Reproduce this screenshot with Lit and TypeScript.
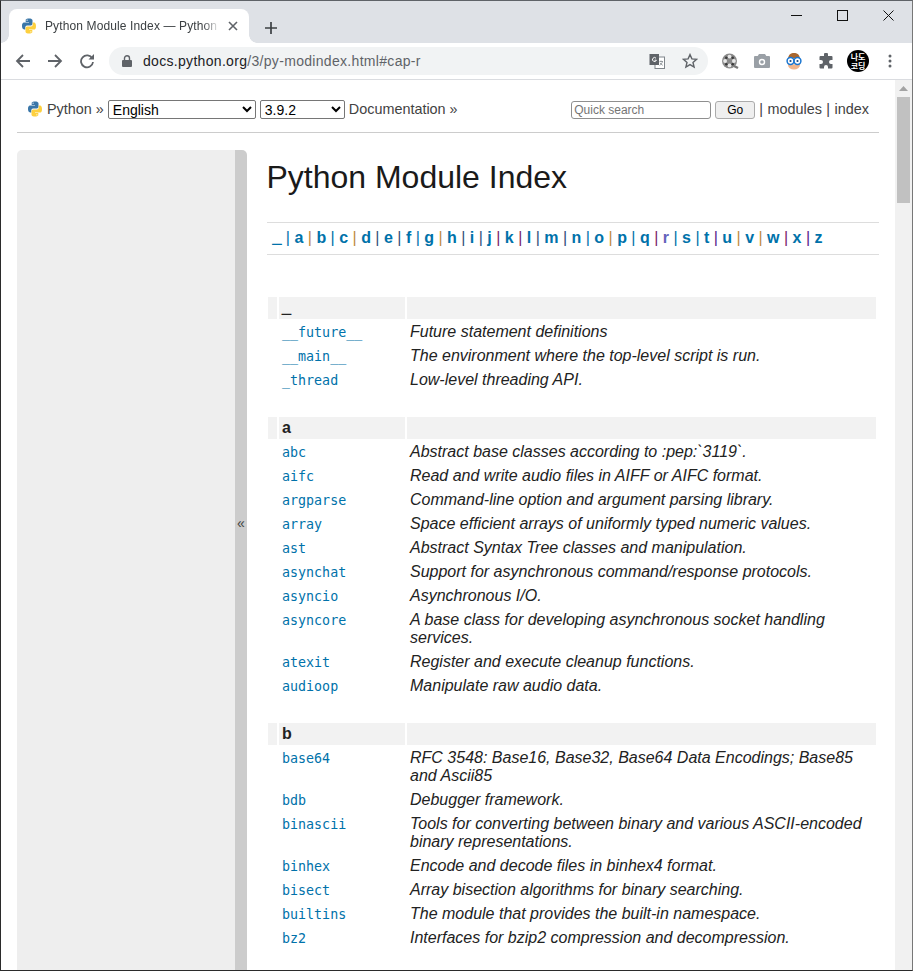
import { LitElement, html, css, svg } from "lit";
import { customElement } from "lit/decorators.js";

const letters = "_ a b c d e f g h i j k l m n o p q r s t u v w x z".split(" ");
const sepColors = ["#0072aa", "#c08a3e", "#0072aa", "#c08a3e", "#33507a", "#33507a", "#0072aa", "#c08a3e", "#33507a", "#33507a", "#7a1e6a", "#7a1e6a", "#33507a", "#33507a", "#0072aa", "#c08a3e", "#0072aa", "#7a1e6a", "#0072aa", "#0072aa", "#5a1e8a", "#c08a3e", "#c08a3e", "#7a1e6a", "#5a1e8a"];

type Row = [string, string];
const groups: [string, Row[]][] = [
  ["_", [
    ["__future__", "Future statement definitions"],
    ["__main__", "The environment where the top-level script is run."],
    ["_thread", "Low-level threading API."],
  ]],
  ["a", [
    ["abc", "Abstract base classes according to :pep:`3119`."],
    ["aifc", "Read and write audio files in AIFF or AIFC format."],
    ["argparse", "Command-line option and argument parsing library."],
    ["array", "Space efficient arrays of uniformly typed numeric values."],
    ["ast", "Abstract Syntax Tree classes and manipulation."],
    ["asynchat", "Support for asynchronous command/response protocols."],
    ["asyncio", "Asynchronous I/O."],
    ["asyncore", "A base class for developing asynchronous socket handling services."],
    ["atexit", "Register and execute cleanup functions."],
    ["audioop", "Manipulate raw audio data."],
  ]],
  ["b", [
    ["base64", "RFC 3548: Base16, Base32, Base64 Data Encodings; Base85 and Ascii85"],
    ["bdb", "Debugger framework."],
    ["binascii", "Tools for converting between binary and various ASCII-encoded binary representations."],
    ["binhex", "Encode and decode files in binhex4 format."],
    ["bisect", "Array bisection algorithms for binary searching."],
    ["builtins", "The module that provides the built-in namespace."],
    ["bz2", "Interfaces for bzip2 compression and decompression."],
  ]],
];

const pyLogo = (size: number) => svg`<svg width=${size} height=${size} viewBox="0 0 16 16">
  <path fill="#3a76a8" d="M7.900.5C4.600.5 4.700 2 4.700 2v1.900H8v.5H3.300S1 4.100 1 7.800s2 3.600 2 3.600h1.300V9.600s-.1-2 2-2h3.300s1.900 0 1.900-1.800V2.600S11.800.5 7.900.5zM6.100 1.600c.4 0 .6.3.6.6s-.3.6-.6.6-.6-.3-.6-.6.2-.6.6-.6z"/>
  <path fill="#fdd03f" d="M8.100 15.500c3.300 0 3.200-1.500 3.200-1.500v-1.900H8v-.5h4.700s2.300.3 2.300-3.400-2-3.600-2-3.600h-1.300v1.800s.1 2-2 2H6.400s-1.900 0-1.900 1.800v3.200s-.3 2.100 3.600 2.100zm1.800-1.100c-.4 0-.6-.3-.6-.6s.3-.6.6-.6.6.3.6.6-.2.6-.6.6z"/>
</svg>`;

@customElement("app-root")
export class AppRoot extends LitElement {
  static styles = css`
    :host { display: block; height: 971px; overflow: hidden; font-family: "Liberation Sans", Arial, sans-serif; }
    .window { height: 971px; box-sizing: border-box; border: 1px solid #2b2b2b; border-top-color: #5f6368; border-right-color: #777; display: flex; flex-direction: column; background: #fff; overflow: hidden; }
    .titlebar { height: 42px; flex: none; background: #dee1e6; display: flex; align-items: flex-end; padding-left: 8px; position: relative; }
    .tab { width: 240px; height: 34px; background: #fff; border-radius: 8px 8px 0 0; display: flex; align-items: center; box-sizing: border-box; padding: 0 0 0 12px; position: relative; }
    .tab::before, .tab::after { content: ""; position: absolute; bottom: 0; width: 8px; height: 8px; }
    .tab::before { left: -8px; background: radial-gradient(circle at 0 0, transparent 7.5px, #fff 8px); }
    .tab::after { right: -8px; background: radial-gradient(circle at 100% 0, transparent 7.5px, #fff 8px); }
    .tab-title { margin-left: 8px; font: 12px "Liberation Sans", sans-serif; color: #3c4043; width: 176px; white-space: nowrap; overflow: hidden; letter-spacing: 0.12px; -webkit-mask-image: linear-gradient(to right, #000 158px, transparent 175px); }
    .tab-x { margin-left: 7px; display: flex; }
    .newtab { margin: 0 0 9px 16px; display: flex; }
    .winctl { position: absolute; right: 1px; top: 0; display: flex; }
    .winctl div { width: 46px; height: 29px; display: flex; align-items: center; justify-content: center; }
    .toolbar { height: 36px; flex: none; background: #fff; border-bottom: 1px solid #dadce0; display: flex; align-items: center; position: relative; }
    .nav { display: flex; width: 32px; justify-content: center; }
    .nav.first { margin-left: 6px; }
    .omni { margin-left: 6px; width: 599px; height: 28px; border-radius: 14px; background: #f1f3f4; display: flex; align-items: center; padding-left: 13px; box-sizing: border-box; }
    .url { margin-left: 11px; font: 14px "Liberation Sans", sans-serif; letter-spacing: 0.31px; color: #5f6368; flex: 1; }
    .url b { font-weight: normal; color: #202124; }
    .omni-icon { display: flex; width: 30px; justify-content: center; }
    .omni-icon.star { width: 36px; }
    .exts { display: flex; align-items: center; margin-left: 6px; }
    .ext { width: 32px; display: flex; justify-content: center; }
    .body { flex: 1; display: flex; min-height: 0; }
    .page { flex: 1; min-width: 0; padding: 0 16px; overflow: hidden; }
    .scroll { width: 17px; flex: none; background: #f1f1f1; display: flex; flex-direction: column; align-items: center; }
    .scroll .arrow { height: 17px; display: flex; align-items: center; justify-content: center; }
    .scroll .thumb { width: 13px; height: 106px; background: #c1c1c1; }
    .related { height: 53px; box-sizing: border-box; border-bottom: 1px solid #ccc; display: flex; align-items: center; font-size: 14.4px; color: #424242; padding: 6px 10px 0; white-space: nowrap; }
    .crumb { display: flex; align-items: center; gap: 4px; }
    select { font: 14px "Liberation Sans", sans-serif; color: #000; background: #fff; border: 1px solid #767676; border-radius: 2px; height: 19px; box-sizing: border-box; padding: 0; flex: none; }
    .lang { width: 148px; margin-left: 4px; }
    .ver { width: 85px; margin-left: 4px; }
    .doc { margin-left: 4px; }
    .spacer { flex: 1; }
    .search { width: 140px; height: 18px; box-sizing: border-box; border: 1px solid #8f8f8f; border-radius: 3px; font: 12px "Liberation Sans", sans-serif; padding: 0 2px; margin: 1px 4px 0 0; }
    .search::placeholder { color: #757575; }
    .go { width: 40px; height: 18px; box-sizing: border-box; border: 1px solid #ababab; border-radius: 3px; background: #efefef; font: 12px "Liberation Sans", sans-serif; color: #000; padding: 0; margin: 1px 4px 0 0; }
    .links { word-spacing: 0.5px; }
    .main { display: flex; margin-top: 17px; }
    .side { width: 218px; flex: none; background: #eee; border-radius: 5px 0 0 0; height: 840px; }
    .collapse { width: 12px; flex: none; background: #ccc; border-radius: 0 5px 0 0; height: 840px; display: flex; align-items: center; justify-content: center; color: #444; font-size: 14px; padding-bottom: 95px; box-sizing: border-box; }
    .content { flex: 1; min-width: 0; padding-left: 20px; }
    h1 { margin: 0 0 0 -0.6px; font: 400 32px/55px "Liberation Sans", sans-serif; color: #1a1a1a; }
    .letters { margin-top: 17px; height: 33px; box-sizing: border-box; border: solid #ddd; border-width: 1px 0; display: flex; align-items: center; padding: 0 0 2px 5.5px; font-size: 16px; font-weight: 700; white-space: nowrap; }
    .letters a { color: #0072aa; }
    .letters a.cur { color: #6363bb; }
    .letters i { font-style: normal; font-weight: 400; margin: 0 4.45px; }
    .us { -webkit-text-stroke: 0.6px currentColor; }
    table { margin: 42px 0 0 -1px; border-collapse: separate; border-spacing: 2px 0; width: 612px; table-layout: fixed; font-size: 16px; line-height: 18px; color: #222; }
    col.c0 { width: 9px; }
    col.c1 { width: 126px; }
    .head td { background: #f2f2f2; height: 22px; padding: 0 0 0 3px; font-weight: 700; line-height: 22px; vertical-align: bottom; }
    .row td { padding: 4px 3px 2px; vertical-align: top; }
    .row td.d { font-style: italic; }
    .row td.m { padding: 5px 3px 1px; }
    .row a { display: block; font: 13.33px/18px "DejaVu Sans Mono", monospace; color: #0072aa; }
    .gap td { height: 26px; padding: 0; }
  `;

  render() {
    return html`<div class="window">
      <div class="titlebar">
        <div class="tab">
          ${pyLogo(16)}
          <span class="tab-title">Python Module Index — Python 3.9.2 documentation</span>
          <span class="tab-x"><svg width="10" height="10" viewBox="0 0 10 10"><path d="M1 1l8 8M9 1l-8 8" stroke="#5f6368" stroke-width="1.600"/></svg></span>
        </div>
        <span class="newtab"><svg width="12" height="12" viewBox="0 0 12 12"><path d="M6 0v12M0 6h12" stroke="#3c4043" stroke-width="1.700"/></svg></span>
        <div class="winctl">
          <div><svg width="11" height="11" viewBox="0 0 11 11"><path d="M0 5.500h11" stroke="#111" fill="none"/></svg></div>
          <div><svg width="11" height="11" viewBox="0 0 11 11"><rect x=".5" y=".5" width="10" height="10" stroke="#111" fill="none"/></svg></div>
          <div><svg width="11" height="11" viewBox="0 0 11 11"><path d="M.5.5l10 10M10.500.5l-10 10" stroke="#111" fill="none"/></svg></div>
        </div>
      </div>
      <div class="toolbar">
        <span class="nav first"><svg width="16" height="16" viewBox="0 0 16 16"><path d="M15 8H2M8 2L2 8l6 6" fill="none" stroke="#5f6368" stroke-width="1.800"/></svg></span>
        <span class="nav"><svg width="16" height="16" viewBox="0 0 16 16"><path d="M1 8h13M8 2l6 6-6 6" fill="none" stroke="#5f6368" stroke-width="1.800"/></svg></span>
        <span class="nav"><svg width="16" height="16" viewBox="0 0 16 16"><path d="M13.300 5.500A6 6 0 1 0 14 9" fill="none" stroke="#5f6368" stroke-width="1.800"/><path d="M9.500 6.500H15V1z" fill="#5f6368"/></svg></span>
        <div class="omni">
          <svg width="10" height="12" viewBox="0 0 10 12"><path fill="#5f6368" d="M1 5h8a1 1 0 0 1 1 1v5a1 1 0 0 1-1 1H1a1 1 0 0 1-1-1V6a1 1 0 0 1 1-1z"/><path fill="none" stroke="#5f6368" stroke-width="1.400" d="M2.500 5V3.300a2.500 2.500 0 0 1 5 0V5"/></svg>
          <span class="url"><b>docs.python.org</b>/3/py-modindex.html#cap-r</span>
          <span class="omni-icon"><svg width="16" height="16" viewBox="0 0 16 16"><rect x="6" y="4" width="9.500" height="11.500" fill="#fff" stroke="#80868b"/><rect x="0.500" y="1" width="9.500" height="11" fill="#5f6368"/><path d="M7 5.200a2 2 0 1 0 .4 2H5.500" fill="none" stroke="#fff" stroke-width="1"/><path d="M10.500 8.500h3.500M12 7.500v1M13.500 8.500c-.4 1.800-1.500 3-3 3.800M11 9.800c.6 1 1.500 2 2.800 2.500" stroke="#80868b" fill="none" stroke-width=".8"/></svg></span>
          <span class="omni-icon star"><svg width="16" height="16" viewBox="0 0 16 16"><path d="M8 1.600l1.900 4.300 4.700.4-3.600 3.100 1.100 4.600L8 11.600 3.900 14l1.100-4.600-3.600-3.100 4.700-.4z" fill="none" stroke="#5f6368" stroke-width="1.400"/></svg></span>
        </div>
        <div class="exts">
          <span class="ext"><svg width="18" height="18" viewBox="0 0 18 18"><circle cx="8.500" cy="9" r="7.500" fill="#8a8a8a"/><path d="M13 14l4 2" stroke="#777" stroke-width="2.500"/><g fill="#e8e8e8"><circle cx="8.500" cy="4.600" r="1.900"/><circle cx="8.500" cy="13.400" r="1.900"/><circle cx="4.100" cy="9" r="1.900"/><circle cx="12.900" cy="9" r="1.900"/></g><g fill="#3a3a3a"><circle cx="5.300" cy="5.800" r="1.300"/><circle cx="11.700" cy="12.200" r="1.300"/><circle cx="5.300" cy="12.200" r="1.300"/><circle cx="11.700" cy="5.800" r="1.300"/></g></svg></span>
          <span class="ext"><svg width="16" height="14" viewBox="0 0 16 14"><path fill="#9aa0a6" d="M5 0h6l1.300 2H15a1 1 0 0 1 1 1v10a1 1 0 0 1-1 1H1a1 1 0 0 1-1-1V3a1 1 0 0 1 1-1h2.700z"/><circle cx="8" cy="8" r="3.200" fill="#fff"/><circle cx="8" cy="8" r="1.800" fill="#9aa0a6"/></svg></span>
          <span class="ext"><svg width="16" height="18" viewBox="0 0 16 18"><path fill="#a8672f" d="M2 8C2 2 5 1 8 1s6 1 6 7z"/><ellipse cx="8" cy="13" rx="6" ry="4.500" fill="#f0b58c"/><rect x="1" y="6" width="14" height="7" rx="3" fill="#f0c8a8"/><circle cx="4.500" cy="9" r="3.400" fill="#fff" stroke="#1976d2" stroke-width="1.500"/><circle cx="11.500" cy="9" r="3.400" fill="#fff" stroke="#1976d2" stroke-width="1.500"/><circle cx="4.500" cy="9" r="1.100" fill="#1a4a80"/><circle cx="11.500" cy="9" r="1.100" fill="#1a4a80"/></svg></span>
          <span class="ext"><svg width="16" height="16" viewBox="0 0 16 16"><path fill="#5f6368" d="M6 1.500a2 2 0 0 1 4 0V3h3.500a1 1 0 0 1 1 1v3H13a2 2 0 0 0 0 4h1.500v3.500a1 1 0 0 1-1 1H10V14a2 2 0 0 0-4 0v1.500H2.500a1 1 0 0 1-1-1V11H3a2 2 0 0 0 0-4H1.500V4a1 1 0 0 1 1-1H6z"/></svg></span>
          <span class="ext"><svg width="22" height="22" viewBox="0 0 22 22"><circle cx="11" cy="11" r="11" fill="#000"/><text x="11" y="9.500" text-anchor="middle" font-size="8" font-weight="700" fill="#fff" font-family="Noto Sans CJK KR, sans-serif">나도</text><text x="11" y="19" text-anchor="middle" font-size="8" font-weight="700" fill="#fff" font-family="Noto Sans CJK KR, sans-serif">코딩</text></svg></span>
          <span class="ext"><svg width="4" height="14" viewBox="0 0 4 14"><g fill="#5f6368"><circle cx="2" cy="2" r="1.500"/><circle cx="2" cy="7" r="1.500"/><circle cx="2" cy="12" r="1.500"/></g></svg></span>
        </div>
      </div>
      <div class="body">
        <div class="page">
          <div class="related">
            <span class="crumb">${pyLogo(16)}<a>Python</a> »</span>
            <select class="lang"><option>English</option></select>
            <select class="ver"><option>3.9.2</option></select>
            <span class="doc">Documentation »</span>
            <span class="spacer"></span>
            <input class="search" placeholder="Quick search" />
            <button class="go">Go</button>
            <span class="links">| modules | index</span>
          </div>
          <div class="main">
            <div class="side"></div>
            <div class="collapse">«</div>
            <div class="content">
              <h1>Python Module Index</h1>
              <div class="letters">
                ${letters.map((l, i) => html`<a class=${l === "r" ? "cur" : l === "_" ? "us" : ""}>${l}</a>${i < letters.length - 1 ? html`<i style="color:${sepColors[i]}">|</i>` : ""}`)}
              </div>
              <table>
                <colgroup><col class="c0" /><col class="c1" /><col /></colgroup>
                ${groups.map(([g, rows], gi) => html`
                  ${gi > 0 ? html`<tr class="gap"><td colspan="3"></td></tr>` : ""}
                  <tr class="head"><td></td><td><span class=${g === "_" ? "us" : ""}>${g}</span></td><td></td></tr>
                  ${rows.map(([m, d]) => html`<tr class="row"><td></td><td class="m"><a>${m}</a></td><td class="d">${d}</td></tr>`)}
                `)}
              </table>
            </div>
          </div>
        </div>
        <div class="scroll">
          <div class="arrow"><svg width="9" height="5" viewBox="0 0 9 5"><path d="M4.500 0L9 5H0z" fill="#a3a3a3"/></svg></div>
          <div class="thumb"></div>
        </div>
      </div>
    </div>`;
  }
}
